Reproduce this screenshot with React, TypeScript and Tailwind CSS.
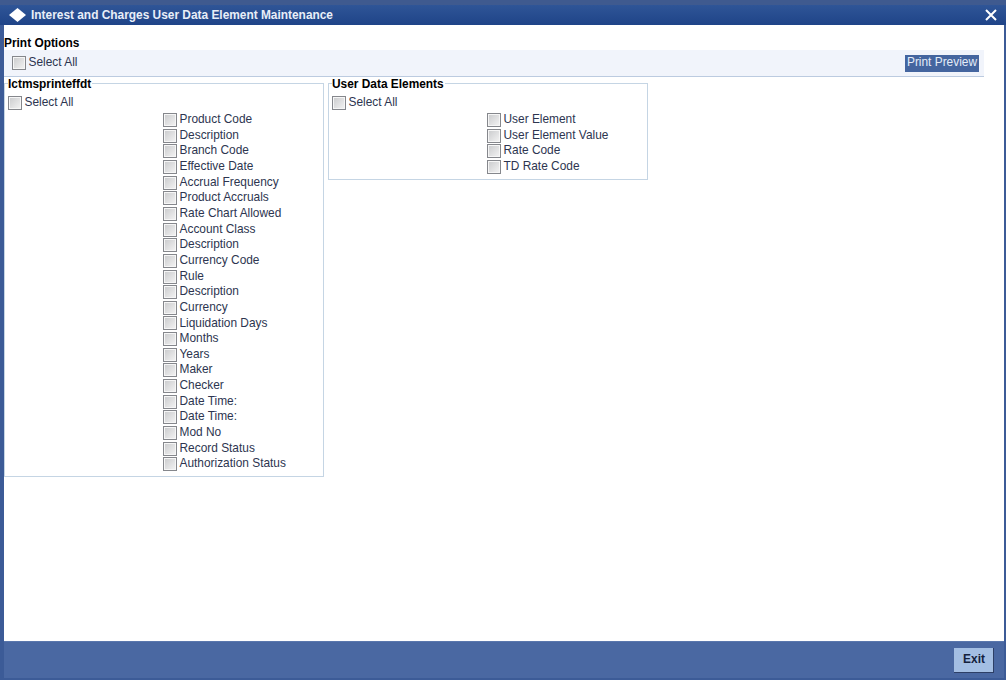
import React from "react";

function Box() {
  return (
    <span className="flex h-[14px] w-[14px] shrink-0 border border-[#85878c] bg-[linear-gradient(135deg,#c9cacc,#f4f4f4)] shadow-[inset_0_0_0_1px_#f6f6f6]" />
  );
}

function Check({ label, className }: { label: string; className?: string }) {
  return (
    <label className={"flex items-center gap-[2.5px] " + (className ?? "")}>
      <Box />
      <span className="whitespace-nowrap">{label}</span>
    </label>
  );
}

function Group({
  title,
  items,
  className,
  indent,
}: {
  title: string;
  items: string[];
  className: string;
  indent: string;
}) {
  return (
    <fieldset className={"border border-[#c5d5e4] pl-[3px] " + className}>
      <legend className="translate-y-px px-0 pr-[1px] text-[11.9px] leading-[14px] font-bold text-black">{title}</legend>
      <Check label="Select All" className="mt-[5px] h-[16px] pl-0" />
      <div className={"mt-[1.3px] flex flex-col " + indent}>
        {items.map((t, i) => (
          <Check key={i} label={t} className="h-[15.65px]" />
        ))}
      </div>
    </fieldset>
  );
}

const left = [
  "Product Code",
  "Description",
  "Branch Code",
  "Effective Date",
  "Accrual Frequency",
  "Product Accruals",
  "Rate Chart Allowed",
  "Account Class",
  "Description",
  "Currency Code",
  "Rule",
  "Description",
  "Currency",
  "Liquidation Days",
  "Months",
  "Years",
  "Maker",
  "Checker",
  "Date Time:",
  "Date Time:",
  "Mod No",
  "Record Status",
  "Authorization Status",
];
const right = ["User Element", "User Element Value", "Rate Code", "TD Rate Code"];

export default function App() {
  return (
    <div className="flex h-[680px] w-[1006px] flex-col overflow-hidden bg-[#3c5b97] font-['Liberation_Sans',Arial,sans-serif] text-[11.9px] text-[#2d3550]">
      <header className="flex h-[25px] shrink-0 items-center border-t-[5px] border-t-[#3f5a8f] bg-[linear-gradient(#2f5597,#1f4488)] pl-[9px] pr-[9px] text-white">
        <svg width="17" height="14" viewBox="0 0 17 14" className="shrink-0">
          <path d="M8.5 0 L17 7 L8.5 14 L0 7 Z" fill="#fff" />
        </svg>
        <h1 className="ml-[5px] text-[11.9px] leading-[14px] font-bold text-[#e8eef8]">
          Interest and Charges User Data Element Maintenance
        </h1>
        <svg width="12" height="12" viewBox="0 0 12 12" className="ml-auto" stroke="#fff" strokeWidth="2" fill="none">
          <path d="M1 1 L11 11 M11 1 L1 11" />
        </svg>
      </header>
      <div className="ml-[4px] mr-[2px] flex min-h-0 flex-1 flex-col bg-white">
        <div className="box-content h-[18px] pt-[11px] text-[11.9px] leading-[14px] font-bold text-black">Print Options</div>
        <div className="mr-[20px] -mt-[4px] -mb-[1px] flex h-[27px] items-center justify-between border-b border-b-[#bccbe0] bg-[#f1f4fb] pl-[8px] pr-[5px]">
          <Check label="Select All" />
          <button className="h-[17px] w-[74px] whitespace-nowrap bg-[#44659f] pb-[2px] text-center text-[11.9px] leading-[15px] text-[#e4ecf8]">
            Print Preview
          </button>
        </div>
        <div className="flex items-start gap-[4px]">
          <Group title="Ictmsprinteffdt" items={left} className="h-[401px] w-[320px]" indent="pl-[155px]" />
          <Group title="User Data Elements" items={right} className="h-[104px] w-[320px]" indent="pl-[155px]" />
        </div>
      </div>
      <footer className="ml-[4px] mr-[2px] mb-[2px] flex h-[37px] shrink-0 items-center justify-end border-t border-t-[#5a77ad] bg-[#4a68a2] pr-[10px]">
        <button className="h-[25px] w-[40px] border-b border-r border-b-[#2d3f66] border-r-[#2d3f66] bg-[#a3bee3] pt-[1px] pl-[1px] text-[11.9px] font-bold text-[#14213d]">
          Exit
        </button>
      </footer>
    </div>
  );
}
